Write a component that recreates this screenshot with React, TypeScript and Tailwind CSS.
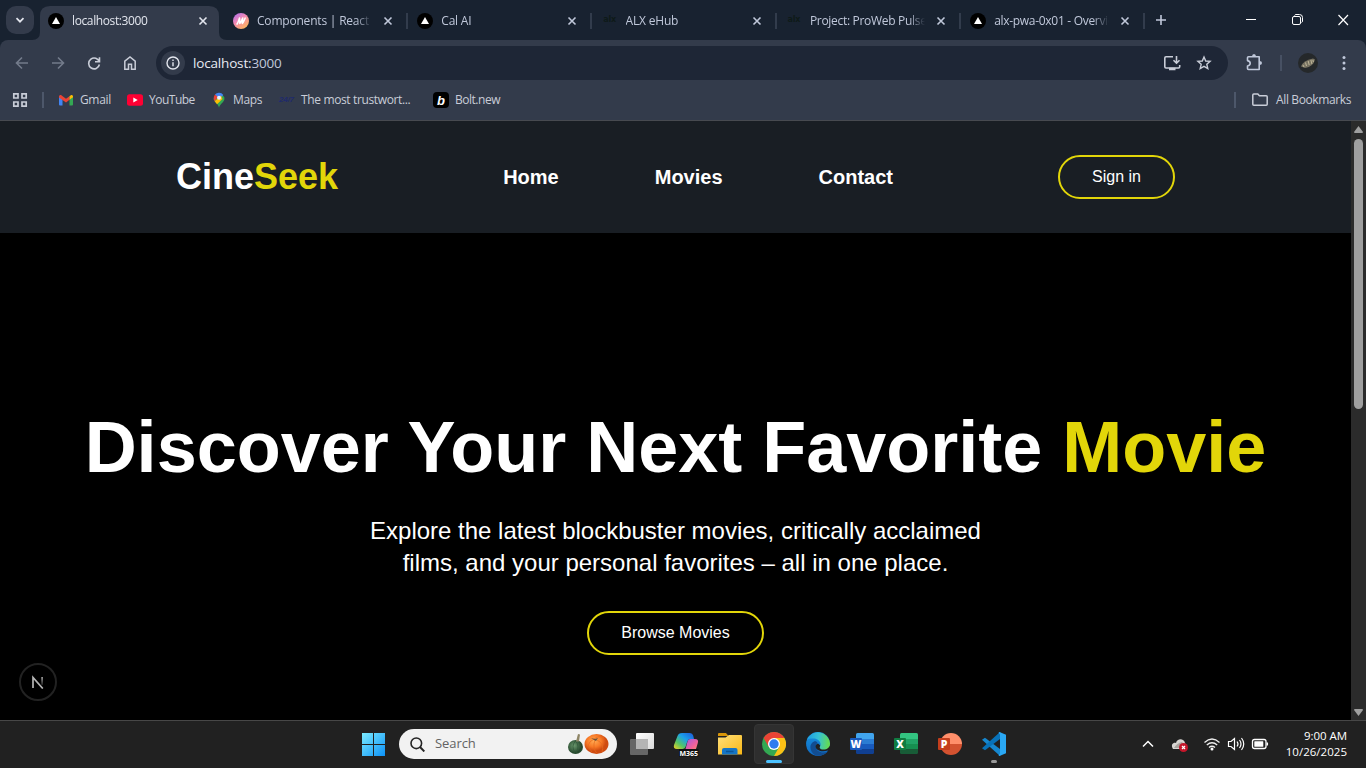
import React from "react";
import type { ReactNode } from "react";

const ui = "font-['Open_Sans','Noto_Sans',sans-serif]";

function X({ className = "" }: { className?: string }) {
  return (
    <svg width="16" height="16" viewBox="0 0 16 16" className={`shrink-0 ${className}`}>
      <path d="M4.500 4.500l7 7M11.500 4.500l-7 7" stroke="currentColor" strokeWidth="1.600" />
    </svg>
  );
}

function Triangle() {
  return (
    <svg width="16" height="16" viewBox="0 0 16 16">
      <circle cx="8" cy="8" r="8" fill="#000" />
      <path d="M8 4l4 7H4z" fill="#fff" />
    </svg>
  );
}

function MIcon() {
  return (
    <svg width="16" height="16" viewBox="0 0 16 16">
      <defs>
        <linearGradient id="mg" x1="0" y1="0" x2=".7" y2="1">
          <stop offset="0" stopColor="#a66bf5" />
          <stop offset=".5" stopColor="#f58bb0" />
          <stop offset="1" stopColor="#fbb45c" />
        </linearGradient>
      </defs>
      <circle cx="8" cy="8" r="8" fill="url(#mg)" />
      <path d="M3.500 11.500c1.200-.5 2.200-4 3-6.500l.3 5.500c1.200-.8 2-3.500 2.900-5.500l-.4 5.500c1.300-1 1.900-3.500 3.200-6" fill="none" stroke="#fff" strokeWidth="1.500" strokeLinejoin="round" />
    </svg>
  );
}

function Alx() {
  return <span className="pb-0.5 font-['DejaVu_Sans',sans-serif] text-[8px] leading-4 font-bold tracking-[-0.2px] text-[#0e1a18]">alx</span>;
}

const tabs: { title: string; icon: ReactNode; track: string }[] = [
  { title: "localhost:3000", icon: <Triangle />, track: "tracking-[-0.38px]" },
  { title: "Components | React Course", icon: <MIcon />, track: "tracking-[-0.2px]" },
  { title: "Cal AI", icon: <Triangle />, track: "tracking-[-0.2px]" },
  { title: "ALX eHub", icon: <Alx />, track: "tracking-[-0.2px]" },
  { title: "Project: ProWeb Pulse", icon: <Alx />, track: "tracking-[-0.3px]" },
  { title: "alx-pwa-0x01 - Overview", icon: <Triangle />, track: "tracking-[-0.3px]" },
];

function TabStrip() {
  return (
    <div className="flex h-10 bg-[#182230] pl-1.5">
      <div className="mt-1.5 flex size-7 items-center justify-center rounded-[10px] bg-[#333b4b] text-[#e3e6ee]">
        <svg width="10" height="10" viewBox="0 0 10 10"><path d="M1.500 3.200L5 6.700l3.500-3.500" fill="none" stroke="currentColor" strokeWidth="1.700" /></svg>
      </div>
      <div className="flex pl-1.5">
        {tabs.map((t, i) => (
          <div key={t.title} className={`relative flex items-end ${i ? "w-[184.300px]" : "w-[185px]"}`}>
            {i === 0 && (
              <svg width="195" height="34" viewBox="0 0 195 34" className="absolute bottom-0 -left-2">
                <path d="M0 34q8 0 8-8V10Q8 0 18 0h159q10 0 10 10v16q0 8 8 8z" fill="#333b4b" />
              </svg>
            )}
            <div className="relative flex h-[38px] w-full items-center pl-2">
              <span className="flex size-4 shrink-0 items-center justify-center">{t.icon}</span>
              <span className={`ml-2 w-[115px] overflow-hidden text-[12px] whitespace-nowrap [mask-image:linear-gradient(to_right,#000_86%,transparent)] ${i ? "text-[#c0c8da]" : "text-[#e3e6ee]"} ${t.track}`}>{t.title}</span>
              <X className={`ml-2 ${i ? "text-[#c0c8da]" : "text-[#e3e6ee]"}`} />
              {i > 0 && <span className="ml-[10px] h-4 w-0.5 shrink-0 bg-[#323c4c]" />}
            </div>
          </div>
        ))}
      </div>
      <svg width="16" height="16" viewBox="0 0 16 16" className="mt-3 ml-[7px] text-[#c0c8da]"><path d="M8 3v10M3 8h10" stroke="currentColor" strokeWidth="1.600" /></svg>
      <svg width="138" height="40" viewBox="0 0 138 40" fill="none" stroke="currentColor" className="ml-auto text-white">
        <path d="M18 19.500h10" />
        <path d="M64.500 18q0-1.500 1.500-1.500h5q1.500 0 1.500 1.500v5q0 1.500-1.500 1.500h-5q-1.500 0-1.500-1.500zM66.500 15.500q.5-1 1.500-1h3.500q3 0 3 3V21q0 1-1 1.500" />
        <path d="M110.500 15l9.500 10M120 15l-9.500 10" strokeWidth="1.200" />
      </svg>
    </div>
  );
}

function Toolbar() {
  return (
    <div className="bg-[#182230]">
      <div className="flex h-10 items-center rounded-t-lg bg-[#333b4b]">
        <svg width="156" height="40" viewBox="0 0 156 40" fill="none" className="shrink-0">
          <path d="M28 23H16.800M22 17.500L16.500 23l5.500 5.500M52 23h11.200M58 17.500l5.500 5.500-5.500 5.500" stroke="#737b8b" strokeWidth="1.600" />
          <path d="M99.300 22a5.400 5.400 0 1 0 .1 2.500M99.500 17.300v4.500H95" stroke="#c9cdd8" strokeWidth="1.600" />
          <path d="M124.800 29.200v-8l5.200-4.200 5.200 4.200v8h-3.700v-5h-3v5z" stroke="#c9cdd8" strokeWidth="1.500" />
        </svg>
        <div className="mt-1.5 flex h-[34px] w-[1072px] items-center rounded-full bg-[#1e2636] pl-[5px]">
          <span className="flex size-6 items-center justify-center rounded-full bg-[#333b4b]">
            <svg width="14" height="14" viewBox="0 0 14 14"><circle cx="7" cy="7" r="6" fill="none" stroke="#e3e6ee" strokeWidth="1.400" /><path d="M7 6.200v4M7 3.500v1.500" stroke="#e3e6ee" strokeWidth="1.400" /></svg>
          </span>
          <span className="ml-2 text-[13.500px] tracking-[-0.170px] text-[#e8eaf2]">localhost:<span className="text-[#c0c8da]">3000</span></span>
          <svg width="64" height="34" viewBox="0 0 64 34" fill="none" className="ml-auto" stroke="#c9cdd8" strokeWidth="1.600">
            <path d="M9 10.700H2q-1.200 0-1.200 1.200v8.900q0 1.200 1.200 1.200h12.500q1.200 0 1.200-1.200V19" />
            <path d="M5 23h6.500" strokeWidth="2.500" />
            <path d="M12.500 10v7M9.500 14.200l3 3 3-3" />
            <path d="M40 11l1.700 4 4.400.4-3.300 2.900 1 4.300-3.800-2.300-3.800 2.300 1-4.300-3.300-2.900 4.400-.4z" strokeWidth="1.400" />
          </svg>
        </div>
        <svg width="138" height="40" viewBox="0 0 138 40" fill="none">
          <path d="M20.500 16.800h10.700v12.700H20.500q-1 0-1-1V26q2.700-.5 2.700-2.700t-2.700-2.700v-2.800q0-1 1-1z" stroke="#c0c8da" strokeWidth="1.600" strokeLinejoin="round" />
          <path d="M24 16.500q0-2.500 2-2.500t2 2.500zM31.500 21q2.500 0 2.500 2t-2.500 2z" fill="#c0c8da" />
          <path d="M53 15v16" stroke="#4d576a" strokeWidth="1.600" />
          <circle cx="80" cy="23" r="10" fill="#25282a" />
          <path d="M73 26.500q2-6 12-8l2 1q-1.500 7-10 8.500z" fill="#777261" />
          <path d="M75 25l1 2m1.500-4.500l1 3.500m1.700-5l1 4m1.700-5l1 4m1-4l.5 2" stroke="#cfc5a5" strokeWidth=".8" />
          <g fill="#c0c8da"><circle cx="116" cy="17.500" r="1.500" /><circle cx="116" cy="23" r="1.500" /><circle cx="116" cy="28.500" r="1.500" /></g>
        </svg>
      </div>
    </div>
  );
}

function Bookmarks() {
  return (
    <div className="flex h-[41px] items-center border-b border-[#474a50] bg-[#333b4b] pr-[15px] pl-3 text-[12px] text-[#c9cdd8]">
      <svg width="16" height="16" viewBox="0 0 16 16" fill="none" stroke="#c9cdd8" strokeWidth="1.700"><path d="M1.800 1.800h4.200v4.200H1.800zM10 1.800h4.200v4.200H10zM1.800 10h4.200v4.200H1.800zM10 10h4.200v4.200H10z" /></svg>
      <span className="ml-3.5 h-4 w-0.5 bg-[#4d576a]" />
      <svg width="16" height="16" viewBox="0 0 16 16" className="ml-[14px]">
        <path d="M1 4l3.500 2.600V13.500H2q-1 0-1-1z" fill="#4285f4" />
        <path d="M15 4l-3.500 2.600v6.900H14q1 0 1-1z" fill="#34a853" />
        <path d="M1 4.500Q1 2.500 3 3L8 6.800 11.500 4.200v3.500L8 10.600 1 5.500z" fill="#ea4335" />
        <path d="M11.500 4.200L13.200 3Q15 2.500 15 4.500v.8l-3.500 2.500z" fill="#fbbc04" />
      </svg>
      <span className="ml-[6px] w-[31px] tracking-[-0.350px] whitespace-nowrap">Gmail</span>
      <svg width="16" height="16" viewBox="0 0 16 16" className="ml-[16px]"><rect y="2.300" width="16" height="11.400" rx="2.500" fill="#ff0033" /><path d="M6.300 5.500l4.400 2.500-4.400 2.500z" fill="#fff" /></svg>
      <span className="ml-[6px] w-[46px] tracking-[-0.500px] whitespace-nowrap">YouTube</span>
      <svg width="16" height="16" viewBox="0 0 16 16" className="ml-[16px]">
        <path d="M8 15.800C7.500 12 3 10 2.500 6.500L6 6.200l5-3.700 2.300 2.700C14.500 10 8.800 11.500 8 15.800z" fill="#34a853" />
        <path d="M4 2.500A5.500 5.500 0 0 1 12.300 3L8.500 7 5 5z" fill="#4285f4" />
        <path d="M4 2.500L7 5 3.700 9.300Q1.500 6 4 2.500z" fill="#ea4335" />
        <path d="M3.700 9.300L10 3.500l1.500 3.500L6 12.200z" fill="#fbbc04" />
        <circle cx="8" cy="5.800" r="2" fill="#e8f0fe" />
      </svg>
      <span className="ml-[6px] w-[30px] tracking-[-0.350px] whitespace-nowrap">Maps</span>
      <span className="ml-[16px] w-[17px] font-['Liberation_Sans',sans-serif] text-[8px] font-bold tracking-[-0.200px] whitespace-nowrap text-[#1f2a6c] italic">24/7</span>
      <span className="ml-[5px] w-[110px] tracking-[-0.360px] whitespace-nowrap">The most trustwort...</span>
      <span className="ml-[22px] flex size-4 items-center justify-center rounded bg-black font-['Liberation_Sans',sans-serif] text-[13px] leading-none font-black text-white italic">b</span>
      <span className="ml-[6px] tracking-[-0.480px] whitespace-nowrap">Bolt.new</span>
      <span className="ml-auto h-4 w-0.5 bg-[#4d576a]" />
      <svg width="16" height="14" viewBox="0 0 16 14" className="ml-[16px]"><path d="M.8 2q0-1 1-1h4l1.600 1.800h6.800q1 0 1 1v7.400q0 1-1 1H1.800q-1 0-1-1z" fill="none" stroke="#c9cdd8" strokeWidth="1.500" /></svg>
      <span className="ml-2 w-[75px] tracking-[-0.370px] whitespace-nowrap">All Bookmarks</span>
    </div>
  );
}

function Page() {
  return (
    <div className="relative flex h-[599px] overflow-hidden bg-black">
      <div className="w-[1351px] shrink-0 font-['Liberation_Sans',Arial,sans-serif] text-white">
        <header className="flex h-28 items-center justify-between bg-[#191e24] px-44">
          <div className="text-4xl font-bold">Cine<span className="text-[#e2d609]">Seek</span></div>
          <nav className="flex gap-24 text-xl font-bold"><a>Home</a><a>Movies</a><a>Contact</a></nav>
          <button className="rounded-full border-2 border-[#e2d609] px-8 py-2">Sign in</button>
        </header>
        <main className="flex h-[599px] flex-col items-center justify-center text-center">
          <h1 className="mb-8 text-7xl font-bold whitespace-nowrap">Discover Your Next Favorite <span className="text-[#e2d609]">Movie</span></h1>
          <p className="mb-8 max-w-2xl text-2xl">Explore the latest blockbuster movies, critically acclaimed<br />films, and your personal favorites – all in one place.</p>
          <button className="rounded-full border-2 border-[#e2d609] px-8 py-2">Browse Movies</button>
        </main>
      </div>
      <div className="flex w-[15px] flex-col items-center bg-[#2b2b2b]">
        <svg width="15" height="18" viewBox="0 0 15 18"><path d="M7.500 5l4.500 6q0 1-1 1H4q-1 0-1-1z" fill="#9f9f9f" /></svg>
        <div className="h-[270px] w-[9px] rounded-full bg-[#9f9f9f]" />
        <svg width="15" height="18" viewBox="0 0 15 18" className="mt-auto"><path d="M7.500 14l4.500-6q0-1-1-1H4q-1 0-1 1z" fill="#9f9f9f" /></svg>
      </div>
      <div className="absolute top-[542px] left-[19px] flex size-[38px] items-center justify-center rounded-full border-2 border-[#222] bg-black">
        <svg width="14" height="14" viewBox="0 0 14 14" fill="none">
          <defs><linearGradient id="nf" x1="0" y1="0" x2="0" y2="1"><stop stopColor="#aaa" /><stop offset="1" stopColor="#222" /></linearGradient></defs>
          <path d="M2 13V2.500L11.800 13.500" stroke="#b5b5b5" strokeWidth="1.700" /><path d="M10.300 2h1.600v8h-1.600z" fill="url(#nf)" />
        </svg>
      </div>
    </div>
  );
}

function Office({ letter, tile, bands, round = false }: { letter: string; tile: string; bands: string[]; round?: boolean }) {
  const id = `clip-${letter}`;
  return (
    <svg width="24" height="24" viewBox="0 0 24 24">
      <clipPath id={id}>{round ? <circle cx="13" cy="12" r="11" /> : <rect x="6" y="1" width="18" height="21" rx="1.500" />}</clipPath>
      <g clipPath={`url(#${id})`}>
        <rect width="24" height="7" fill={bands[0]} /><rect y="7" width="24" height="5" fill={bands[1]} />
        <rect y="12" width="24" height="5" fill={bands[2]} /><rect y="17" width="24" height="7" fill={bands[3]} />
      </g>
      <rect y="6" width="12" height="12" rx="1" fill={tile} />
      <text x="6" y="15.600" textAnchor="middle" fontFamily="Open Sans, sans-serif" fontSize="10.500" fontWeight="800" fill="#fff">{letter}</text>
    </svg>
  );
}

function Taskbar() {
  return (
    <div className="flex h-12 items-center border-t border-[#474747] bg-[#212121] pb-px">
      <svg width="24" height="24" viewBox="0 0 24 24" className="ml-[362px]">
        <defs><linearGradient id="win" x1="0" y1="0" x2="1" y2="1"><stop stopColor="#7bebff" /><stop offset="1" stopColor="#0c91f7" /></linearGradient></defs>
        <path d="M0 1h11v11H0zM12 1h11v11H12zM0 13h11v11H0zM12 13h11v11H12z" fill="url(#win)" />
      </svg>
      <div className="ml-[13px] flex h-[30px] w-[218px] items-center rounded-full bg-[#f2f2f2] pl-[11px]">
        <svg width="15" height="15" viewBox="0 0 15 15" fill="none" stroke="#242424" strokeWidth="1.600"><circle cx="6.300" cy="6.300" r="5.300" /><path d="M10 10l4.300 4.500" strokeWidth="1.900" /></svg>
        <span className="ml-[10px] text-[13px] tracking-[-0.080px] text-[#636363]">Search</span>
        <svg width="42" height="22" viewBox="0 0 42 22" className="mr-[8px] ml-auto">
          <defs>
            <radialGradient id="pk" cx=".4" cy=".35"><stop stopColor="#ffac55" /><stop offset=".6" stopColor="#f87926" /><stop offset="1" stopColor="#cf4b10" /></radialGradient>
            <radialGradient id="gp" cx=".4" cy=".4"><stop stopColor="#6a986d" /><stop offset="1" stopColor="#27492e" /></radialGradient>
          </defs>
          <ellipse cx="8.500" cy="14" rx="7.500" ry="7" fill="url(#gp)" />
          <path d="M8.500 8q-5 5 0 13M8.500 8q5 5 0 13" fill="none" stroke="#31573a" strokeWidth=".7" />
          <path d="M9 8.500L11 1l2 .5-1 7z" fill="#8e8566" />
          <ellipse cx="29.500" cy="11" rx="12" ry="10" fill="url(#pk)" />
          <path d="M27 6q-10 5-2 13M28 7q-3 8 2 13.500M30 7q8 4 5 12M27 6q5-4 10-1" fill="none" stroke="#e56a1d" strokeWidth=".7" />
          <path d="M24 5l4 1 3-1-2 3-2-1z" fill="#6d5138" />
        </svg>
      </div>
      <svg width="24" height="24" viewBox="0 0 24 24" className="ml-[13px]">
        <defs><linearGradient id="tv" x1="0" y1="0" x2="1" y2="1"><stop stopColor="#fff" /><stop offset="1" stopColor="#dadada" /></linearGradient></defs>
        <rect x="6" y="1" width="18" height="16" rx="1" fill="url(#tv)" /><rect y="7" width="18" height="16" rx="1" fill="#666" /><path d="M6 7h12v10H6z" fill="#b4b4b4" />
      </svg>
      <svg width="26" height="26" viewBox="0 0 26 26" className="ml-[19px]">
        <defs>
          <linearGradient id="c1" x1="1" y1="0" x2="0" y2="1"><stop stopColor="#1e55d9" /><stop offset=".4" stopColor="#1ba0e8" /><stop offset=".7" stopColor="#55c466" /><stop offset="1" stopColor="#f5d020" /></linearGradient>
          <linearGradient id="c2" x1="0" y1="0" x2="1" y2="1"><stop stopColor="#9a5be8" /><stop offset=".6" stopColor="#f2619a" /><stop offset="1" stopColor="#fb9466" /></linearGradient>
        </defs>
        <path d="M9 2h8q2.500 0 3.200 2.500L21 8h-4q-2 0-2.700 2.500L12.500 16q-.8 2-3 2H4q-4 0-3-4L4.500 5Q5.500 2 9 2z" fill="url(#c1)" />
        <path d="M17 8h5q4 0 2.800 4l-1.500 5q-.8 3-3.800 3H14q-2 0-1.500-2l2-7.500Q15 8 17 8z" fill="url(#c2)" />
        <rect x="6" y="18" width="19.500" height="7.500" fill="#101010" />
        <text x="15.800" y="24.500" textAnchor="middle" fontFamily="Open Sans, sans-serif" fontSize="7" fontWeight="700" fill="#fff">M365</text>
      </svg>
      <svg width="26" height="24" viewBox="0 0 26 24" className="ml-[18px]">
        <defs><linearGradient id="fd" x1="0" y1="0" x2="1" y2="1"><stop stopColor="#ffe07a" /><stop offset="1" stopColor="#f9b716" /></linearGradient></defs>
        <path d="M1 2q0-1 1-1h7l2.500 3H1z" fill="#d99609" /><path d="M1 5.500h7.500L12 3h12q1 0 1 1v18.500H1z" fill="url(#fd)" />
        <path d="M5 22.500V18q0-2 2-2h11.500q2 0 2 2v4.500z" fill="#1575c5" /><path d="M9 19.500h7.500" stroke="#0c5597" strokeWidth="1.500" />
      </svg>
      <div className="relative ml-[11px] flex size-10 items-center justify-center rounded border border-[#353535] bg-[#2e2e2e]">
        <svg width="24" height="24" viewBox="0 0 24 24">
          <circle cx="12" cy="12" r="12" fill="#33a852" />
          <path d="M1.600 6A12 12 0 0 1 22.400 6H12L6.800 15z" fill="#ea4335" />
          <path d="M22.400 6A12 12 0 0 1 12 24l5.200-9L12 6z" fill="#fbc116" />
          <circle cx="12" cy="12" r="6" fill="#fff" /><circle cx="12" cy="12" r="4.700" fill="#2f7cf0" />
        </svg>
        <span className="absolute bottom-0 h-[3px] w-4 rounded-full bg-[#4cc2ff]" />
      </div>
      <svg width="24" height="24" viewBox="0 0 24 24" className="ml-3">
        <defs>
          <linearGradient id="e1" x1="0" y1=".3" x2="1" y2=".4"><stop stopColor="#1d9de2" /><stop offset=".5" stopColor="#35c1d5" /><stop offset="1" stopColor="#66dc4c" /></linearGradient>
          <linearGradient id="e2" x1="0" y1="0" x2="0" y2="1"><stop stopColor="#1792e0" /><stop offset="1" stopColor="#0f68c0" /></linearGradient>
        </defs>
        <circle cx="12" cy="12" r="11.900" fill="url(#e2)" />
        <path d="M8 9.500C2.500 12 3.500 20 9.500 23.500 14 24.300 19 23 22 19.500c-6 2.500-11.500 0-12.500-4.500 0-2 1-3 2-4C11 9.500 9.500 9 8 9.500z" fill="#124d91" />
        <path d="M9.500 15c1 3.500 6 5.500 12.500 3.500l2-1.500v-3l-8 1-4-3.500c-1.500.5-3 2-2.500 3.500z" fill="#212121" />
        <path d="M.8 8A12 12 0 0 1 24 11.500c0 4-3 6-6.500 6-3 0-4.500-1.500-3.500-3C16 11 12.500 7 8.500 6.500 5.500 6.200 2.500 6.500.8 8z" fill="url(#e1)" />
      </svg>
      <div className="ml-5 flex gap-5">
        <Office letter="W" tile="#185abd" bands={["#41a5ee", "#2b7cd3", "#185abd", "#103f91"]} />
        <Office letter="X" tile="#107c41" bands={["#33c481", "#21a366", "#168f50", "#185c37"]} />
        <Office letter="P" tile="#c43e1c" bands={["#ff8f6b", "#ff8f6b", "#d35230", "#d35230"]} round />
      </div>
      <div className="relative ml-5 flex">
        <svg width="24" height="24" viewBox="0 0 24 24">
          <path d="M0 7.700L3 5.800 20 18.500 18 24z" fill="#1687cf" /><path d="M0 16.300l3 1.900L20 5.500 18 0z" fill="#0872b9" /><path d="M17.500 0L24 2.800v18.400L17.500 24l-1-.7 1.500-1.800v-19L16.500.7z" fill="#2aa8f4" />
        </svg>
        <span className="absolute -bottom-[7px] left-[9px] h-[3px] w-1.5 rounded-full bg-[#9a9a9a]" />
      </div>
      <svg width="140" height="24" viewBox="0 0 140 24" fill="none" className="ml-auto">
        <path d="M7 14.500l5-5 5 5" stroke="#fff" strokeWidth="1.500" />
        <path d="M37 17c-3-5 1-7 3-6 1-5 8-5 9 0l2 6z" fill="#d8d5d2" /><path d="M38 16q3-5 8-6l5 6z" fill="#aaa5a0" />
        <circle cx="47.500" cy="15.500" r="4.500" fill="#c4162a" /><path d="M46 14l3 3M49 14l-3 3" stroke="#fff" strokeWidth="1.200" />
        <path d="M68.500 10.500q7.500-7 15 0M70.800 13q5.200-4.500 10.400 0M73 15.500q3-2.500 6 0" stroke="#eee" strokeWidth="1.300" />
        <circle cx="76" cy="17" r="1.500" fill="#fff" />
        <path d="M92.500 9.500H95L98.500 6.500v11l-3.500-3h-2.500zM101 9.500q2 2.500 0 5M103.500 8q3 4 0 8M105.500 6q4.500 6 0 12" stroke="#fff" strokeWidth="1.200" />
        <rect x="116.500" y="7.500" width="13.500" height="9" rx="2" stroke="#fff" strokeWidth="1.300" /><rect x="118.300" y="9.300" width="9" height="5.400" rx=".5" fill="#fff" /><path d="M131.300 10.500v3" stroke="#fff" strokeWidth="1.500" />
      </svg>
      <div className="mr-[19px] ml-[5px] w-[66px] text-right text-[11.500px] leading-4 tracking-[0.020px] whitespace-nowrap text-white">
        <span className="tracking-[-0.050px]">9:00 AM</span><br />10/26/2025
      </div>
    </div>
  );
}

export default function App() {
  return (
    <div className={`flex h-[768px] w-[1366px] flex-col overflow-hidden ${ui}`}>
      <TabStrip />
      <Toolbar />
      <Bookmarks />
      <Page />
      <Taskbar />
    </div>
  );
}
